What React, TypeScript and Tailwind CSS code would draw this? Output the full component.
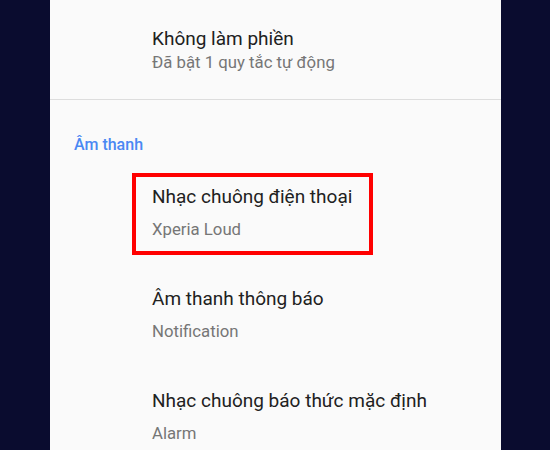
const items = [
  { title: "Nhạc chuông điện thoại", sub: "Xperia Loud", active: true },
  { title: "Âm thanh thông báo", sub: "Notification", active: false },
  { title: "Nhạc chuông báo thức mặc định", sub: "Alarm", active: false },
]

export default function App() {
  return (
    <div
      className="h-[450px] w-[550px] overflow-hidden bg-[#0a0c2f]"
      style={{ fontFamily: "Roboto, 'Noto Sans', sans-serif" }}
    >
      <div className="ml-[50px] h-full w-[451px] bg-[#fafafa]">
        {/* Do not disturb row */}
        <div className="pl-[102px] pt-[27px]">
          <div className="text-[19px] leading-[24px] text-[#212121]">Không làm phiền</div>
          <div className="mt-[1px] text-[16.75px] leading-[20px] text-[#767676]">Đã bật 1 quy tắc tự động</div>
        </div>
        <div className="mt-[27px] h-px bg-[#dddddd]" />

        <div className="mt-[35px] pl-[24px] text-[16px] font-medium leading-[20px] text-[#4a88f3]">Âm thanh</div>

        <div className="mt-[18px] flex flex-col gap-[20px]">
          {items.map((item) => (
            <div
              key={item.title}
              className={`ml-[82px] w-[241px] border-[4px] pl-[16px] pt-[8px] pb-[12px] ${
                item.active ? "border-[#ff0000]" : "border-transparent"
              }`}
            >
              <div className="whitespace-nowrap text-[19px] leading-[24px] text-[#212121]">{item.title}</div>
              <div className="mt-[10px] whitespace-nowrap text-[16.75px] leading-[20px] text-[#767676]">{item.sub}</div>
            </div>
          ))}
        </div>
      </div>
    </div>
  )
}
